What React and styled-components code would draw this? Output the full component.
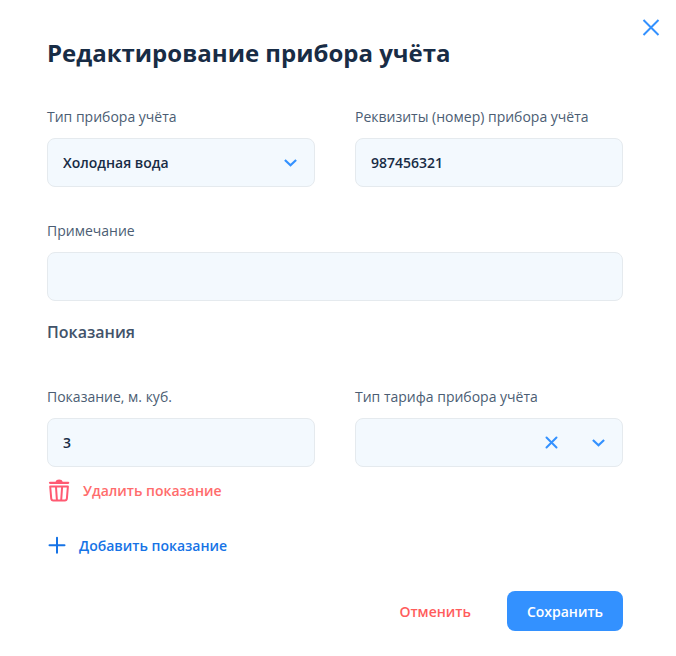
import React, { useState } from 'react';
import styled, { createGlobalStyle } from 'styled-components';

const GlobalStyle = createGlobalStyle`
  * {
    box-sizing: border-box;
  }

  body {
    margin: 0;
    background: #fff;
    color: #182c45;
    font-family: 'Open Sans', 'Noto Sans', sans-serif;
    font-size: 14px;
    line-height: 20px;
  }

  button, input, select {
    font: inherit;
    color: inherit;
  }
`;

const Modal = styled.main`
  padding-bottom: 25px;
`;

const Header = styled.header`
  display: flex;
  justify-content: space-between;
  align-items: flex-start;
  padding: 15px 13px 0 47px;
`;

const Title = styled.h1`
  margin: 20px 0 0;
  font-size: 24px;
  line-height: 36px;
  font-weight: 700;
`;

const IconButton = styled.button`
  display: flex;
  padding: 0;
  border: none;
  background: none;
  color: #3391ff;
  cursor: pointer;
`;

const Form = styled.form`
  display: flex;
  flex-direction: column;
  padding: 36px 53px 0 47px;
`;

const Row = styled.div`
  display: grid;
  grid-template-columns: repeat(${({ $columns }) => $columns || 1}, minmax(0, 1fr));
  column-gap: 40px;
  margin-top: ${({ $top }) => $top || 0}px;
`;

const FieldWrapper = styled.div`
  display: flex;
  flex-direction: column;
  gap: 11px;
`;

const Label = styled.label`
  color: #4b5d73;
`;

const Control = styled.div`
  position: relative;
  display: flex;
`;

const Input = styled.input`
  width: 100%;
  height: 49px;
  padding: 0 15px;
  border: 1px solid #e5eaee;
  border-radius: 8px;
  background: #f3f9fe;
  font-weight: 600;
  outline: none;

  &:focus {
    border-color: #3391ff;
  }
`;

const Select = styled(Input).attrs({ as: 'select' })`
  padding-right: ${({ $clearable }) => ($clearable ? 88 : 48)}px;
  appearance: none;
  cursor: pointer;
`;

const Indicators = styled.div`
  position: absolute;
  top: 0;
  right: 16px;
  bottom: 0;
  display: flex;
  align-items: center;
  gap: 31px;
  color: #3391ff;
  pointer-events: none;

  button {
    pointer-events: auto;
  }
`;

const SubTitle = styled.h2`
  margin: 19px 0 0;
  color: #42536a;
  font-size: 16px;
  line-height: 24px;
  font-weight: 600;
`;

const LinkButton = styled.button`
  display: flex;
  align-items: center;
  align-self: flex-start;
  gap: ${({ $danger }) => ($danger ? 12 : 10)}px;
  height: 24px;
  margin-top: ${({ $danger }) => ($danger ? 12 : 31)}px;
  padding: 0;
  border: none;
  background: none;
  color: ${({ $danger }) => ($danger ? '#ff6c6c' : '#1673e6')};
  font-weight: 600;
  cursor: pointer;
`;

const Footer = styled.footer`
  display: flex;
  justify-content: flex-end;
  gap: 16px;
  margin-top: 33px;
`;

const Button = styled.button`
  height: 40px;
  padding: 2px 20px 0;
  border: none;
  border-radius: 8px;
  background: ${({ $primary }) => ($primary ? '#3391ff' : 'none')};
  color: ${({ $primary }) => ($primary ? '#fff' : '#ff5c5c')};
  font-weight: 600;
  cursor: pointer;
`;

const CloseIcon = () => (
  <svg width="24" height="24" viewBox="0 0 24 24" fill="none" stroke="currentColor" strokeWidth="2">
    <path d="M4.5 5 19.5 20M19.5 5 4.5 20" />
  </svg>
);

const ClearIcon = () => (
  <svg width="16" height="16" viewBox="0 0 16 16" fill="none" stroke="currentColor" strokeWidth="2" strokeLinecap="round">
    <path d="M2.5 2.5 12.5 12.5M12.5 2.5 2.5 12.5" />
  </svg>
);

const ArrowIcon = () => (
  <svg width="16" height="16" viewBox="0 0 16 16" fill="none" stroke="currentColor" strokeWidth="2.2">
    <path d="M1.9 5 7.5 10.2 13.1 5" />
  </svg>
);

const TrashIcon = () => (
  <svg width="24" height="24" viewBox="0 0 24 24" fill="none" stroke="#ff5a72" strokeWidth="2">
    <path d="M3 3.8H21.2" strokeWidth="2.2" strokeLinecap="round" />
    <path d="M8.4 3.4C8.9 1.2 10.2.5 12.1.5S15.3 1.2 15.8 3.4Z" fill="#ff5a72" stroke="none" />
    <path d="M3.2 7.5H20.9L19.9 19.3Q19.7 21.4 17.8 21.4H6.3Q4.4 21.4 4.2 19.3Z" strokeLinejoin="round" />
    <path d="M9 8 9.9 21M15.1 8 14.2 21" />
  </svg>
);

const PlusIcon = () => (
  <svg width="22" height="22" viewBox="0 0 22 22" fill="none" stroke="currentColor" strokeWidth="2">
    <path d="M2.5 10.3H17.5M10 2.8V17.8" strokeLinecap="round" />
  </svg>
);

const Field = ({ id, label, children }) => (
  <FieldWrapper>
    <Label htmlFor={id}>{label}</Label>
    <Control>{children}</Control>
  </FieldWrapper>
);

const App = () => {
  const [values, setValues] = useState({
    type: 'cold',
    number: '987456321',
    note: '',
    reading: '3',
    tariff: '',
  });

  const onChange = (e) => {
    setValues({ ...values, [e.target.name]: e.target.value });
  };

  // id, name, value and handler shared by every control
  const bind = (name) => ({ id: name, name, value: values[name], onChange });

  return (
    <>
      <GlobalStyle />
      <Modal>
        <Header>
          <Title>Редактирование прибора учёта</Title>
          <IconButton type="button" aria-label="Закрыть">
            <CloseIcon />
          </IconButton>
        </Header>
        <Form onSubmit={(e) => e.preventDefault()}>
          <Row $columns={2}>
            <Field id="type" label="Тип прибора учёта">
              <Select {...bind('type')}>
                <option value="cold">Холодная вода</option>
              </Select>
              <Indicators>
                <ArrowIcon />
              </Indicators>
            </Field>
            <Field id="number" label="Реквизиты (номер) прибора учёта">
              <Input {...bind('number')} />
            </Field>
          </Row>
          <Row $top={34}>
            <Field id="note" label="Примечание">
              <Input {...bind('note')} />
            </Field>
          </Row>
          <SubTitle>Показания</SubTitle>
          <Row $columns={2} $top={43}>
            <Field id="reading" label="Показание, м. куб.">
              <Input {...bind('reading')} />
            </Field>
            <Field id="tariff" label="Тип тарифа прибора учёта">
              <Select $clearable {...bind('tariff')}>
                <option value="" />
              </Select>
              <Indicators>
                <IconButton
                  type="button"
                  aria-label="Очистить"
                  onClick={() => setValues({ ...values, tariff: '' })}
                >
                  <ClearIcon />
                </IconButton>
                <ArrowIcon />
              </Indicators>
            </Field>
          </Row>
          <LinkButton type="button" $danger>
            <TrashIcon />
            Удалить показание
          </LinkButton>
          <LinkButton type="button">
            <PlusIcon />
            Добавить показание
          </LinkButton>
          <Footer>
            <Button type="button">Отменить</Button>
            <Button type="submit" $primary>Сохранить</Button>
          </Footer>
        </Form>
      </Modal>
    </>
  );
};

export default App;
